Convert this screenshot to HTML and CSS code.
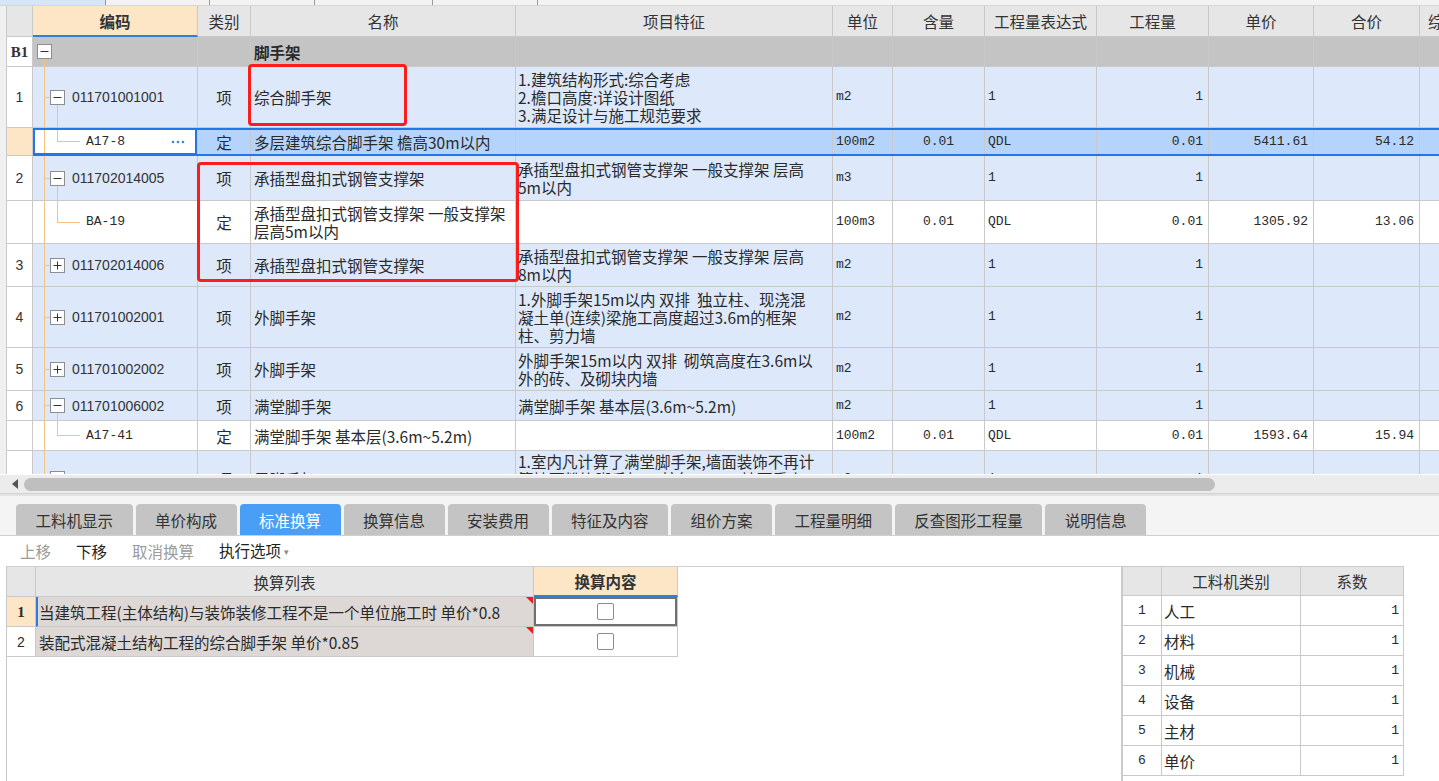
FILE: index.html
```html
<!DOCTYPE html>
<html lang="zh-CN">
<head>
<meta charset="utf-8">
<title>分部分项</title>
<link rel="stylesheet" href="styles.css">
</head>
<body>
<div class="topstrip">
  <div class="ts ts-active"></div>
  <div class="ts w104"></div>
  <div class="ts w105"></div>
  <div class="ts w118"></div>
  <div class="ts w105"></div>
  <div class="ts ts-rest"></div>
</div>

<div class="gridwrap">
  <div class="gutter"></div>
  <div class="grid">
    <div class="row hdr">
      <div class="c rn"></div>
      <div class="c code-h">编码</div>
      <div class="c">类别</div>
      <div class="c">名称</div>
      <div class="c">项目特征</div>
      <div class="c">单位</div>
      <div class="c">含量</div>
      <div class="c">工程量表达式</div>
      <div class="c">工程量</div>
      <div class="c">单价</div>
      <div class="c">合价</div>
      <div class="c lastcol">综合单价</div>
    </div>

    <div class="row gray h30">
      <div class="c rn b1">B1</div>
      <div class="c code t-b1"><svg class="tb" width="15" height="15" viewBox="0 0 15 15"><rect x="0.5" y="0.5" width="14" height="14" fill="#fff" stroke="#8e8e8e"/><path d="M3.5 7.5h8" stroke="#333"/></svg></div>
      <div class="c cat"></div>
      <div class="c name bold">脚手架</div>
      <div class="c"></div><div class="c"></div><div class="c"></div><div class="c"></div><div class="c"></div><div class="c"></div><div class="c"></div><div class="c"></div>
    </div>

    <div class="row blue h61">
      <div class="c rn">1</div>
      <div class="c code t-par"><svg class="tb" width="15" height="15" viewBox="0 0 15 15"><rect x="0.5" y="0.5" width="14" height="14" fill="#fff" stroke="#8e8e8e"/><path d="M3.5 7.5h8" stroke="#333"/></svg><span class="cd">011701001001</span></div>
      <div class="c cat">项</div>
      <div class="c name">综合脚手架</div>
      <div class="c feat">1.建筑结构形式:综合考虑<br>2.檐口高度:详设计图纸<br>3.满足设计与施工规范要求</div>
      <div class="c m">m2</div>
      <div class="c m ctr"></div>
      <div class="c m">1</div>
      <div class="c m num">1</div>
      <div class="c m num"></div>
      <div class="c m num"></div>
      <div class="c"></div>
    </div>

    <div class="row sel h28">
      <div class="c rn"></div>
      <div class="c code t-child active"><span class="m">A17-8</span><svg class="dots" width="14" height="4" viewBox="0 0 14 4"><circle cx="2" cy="2" r="1.3" fill="#3a85dc"/><circle cx="7" cy="2" r="1.3" fill="#3a85dc"/><circle cx="12" cy="2" r="1.3" fill="#3a85dc"/></svg></div>
      <div class="c cat">定</div>
      <div class="c name">多层建筑综合脚手架 檐高30m以内</div>
      <div class="c feat"></div>
      <div class="c m">100m2</div>
      <div class="c m ctr">0.01</div>
      <div class="c m">QDL</div>
      <div class="c m num">0.01</div>
      <div class="c m num">5411.61</div>
      <div class="c m num">54.12</div>
      <div class="c"></div>
    </div>

    <div class="row blue h45">
      <div class="c rn">2</div>
      <div class="c code t-par"><svg class="tb" width="15" height="15" viewBox="0 0 15 15"><rect x="0.5" y="0.5" width="14" height="14" fill="#fff" stroke="#8e8e8e"/><path d="M3.5 7.5h8" stroke="#333"/></svg><span class="cd">011702014005</span></div>
      <div class="c cat">项</div>
      <div class="c name">承插型盘扣式钢管支撑架</div>
      <div class="c feat">承插型盘扣式钢管支撑架 一般支撑架 层高<br>5m以内</div>
      <div class="c m">m3</div>
      <div class="c m ctr"></div>
      <div class="c m">1</div>
      <div class="c m num">1</div>
      <div class="c m num"></div>
      <div class="c m num"></div>
      <div class="c"></div>
    </div>

    <div class="row white h43">
      <div class="c rn"></div>
      <div class="c code t-child"><span class="m">BA-19</span></div>
      <div class="c cat">定</div>
      <div class="c name">承插型盘扣式钢管支撑架 一般支撑架<br>层高5m以内</div>
      <div class="c feat"></div>
      <div class="c m">100m3</div>
      <div class="c m ctr">0.01</div>
      <div class="c m">QDL</div>
      <div class="c m num">0.01</div>
      <div class="c m num">1305.92</div>
      <div class="c m num">13.06</div>
      <div class="c"></div>
    </div>

    <div class="row blue h43">
      <div class="c rn">3</div>
      <div class="c code t-leaf"><svg class="tb" width="15" height="15" viewBox="0 0 15 15"><rect x="0.5" y="0.5" width="14" height="14" fill="#fff" stroke="#8e8e8e"/><path d="M3.5 7.5h8M7.5 3.5v8" stroke="#333"/></svg><span class="cd">011702014006</span></div>
      <div class="c cat">项</div>
      <div class="c name">承插型盘扣式钢管支撑架</div>
      <div class="c feat">承插型盘扣式钢管支撑架 一般支撑架 层高<br>8m以内</div>
      <div class="c m">m2</div>
      <div class="c m ctr"></div>
      <div class="c m">1</div>
      <div class="c m num">1</div>
      <div class="c m num"></div>
      <div class="c m num"></div>
      <div class="c"></div>
    </div>

    <div class="row blue h61">
      <div class="c rn">4</div>
      <div class="c code t-leaf"><svg class="tb" width="15" height="15" viewBox="0 0 15 15"><rect x="0.5" y="0.5" width="14" height="14" fill="#fff" stroke="#8e8e8e"/><path d="M3.5 7.5h8M7.5 3.5v8" stroke="#333"/></svg><span class="cd">011701002001</span></div>
      <div class="c cat">项</div>
      <div class="c name">外脚手架</div>
      <div class="c feat">1.外脚手架15m以内 双排&nbsp;&nbsp;独立柱、现浇混<br>凝土单(连续)梁施工高度超过3.6m的框架<br>柱、剪力墙</div>
      <div class="c m">m2</div>
      <div class="c m ctr"></div>
      <div class="c m">1</div>
      <div class="c m num">1</div>
      <div class="c m num"></div>
      <div class="c m num"></div>
      <div class="c"></div>
    </div>

    <div class="row blue h43">
      <div class="c rn">5</div>
      <div class="c code t-leaf"><svg class="tb" width="15" height="15" viewBox="0 0 15 15"><rect x="0.5" y="0.5" width="14" height="14" fill="#fff" stroke="#8e8e8e"/><path d="M3.5 7.5h8M7.5 3.5v8" stroke="#333"/></svg><span class="cd">011701002002</span></div>
      <div class="c cat">项</div>
      <div class="c name">外脚手架</div>
      <div class="c feat">外脚手架15m以内 双排&nbsp;&nbsp;砌筑高度在3.6m以<br>外的砖、及砌块内墙</div>
      <div class="c m">m2</div>
      <div class="c m ctr"></div>
      <div class="c m">1</div>
      <div class="c m num">1</div>
      <div class="c m num"></div>
      <div class="c m num"></div>
      <div class="c"></div>
    </div>

    <div class="row blue h30">
      <div class="c rn">6</div>
      <div class="c code t-par"><svg class="tb" width="15" height="15" viewBox="0 0 15 15"><rect x="0.5" y="0.5" width="14" height="14" fill="#fff" stroke="#8e8e8e"/><path d="M3.5 7.5h8" stroke="#333"/></svg><span class="cd">011701006002</span></div>
      <div class="c cat">项</div>
      <div class="c name">满堂脚手架</div>
      <div class="c feat">满堂脚手架 基本层(3.6m~5.2m)</div>
      <div class="c m">m2</div>
      <div class="c m ctr"></div>
      <div class="c m">1</div>
      <div class="c m num">1</div>
      <div class="c m num"></div>
      <div class="c m num"></div>
      <div class="c"></div>
    </div>

    <div class="row white h30">
      <div class="c rn"></div>
      <div class="c code t-child"><span class="m">A17-41</span></div>
      <div class="c cat">定</div>
      <div class="c name">满堂脚手架 基本层(3.6m~5.2m)</div>
      <div class="c feat"></div>
      <div class="c m">100m2</div>
      <div class="c m ctr">0.01</div>
      <div class="c m">QDL</div>
      <div class="c m num">0.01</div>
      <div class="c m num">1593.64</div>
      <div class="c m num">15.94</div>
      <div class="c"></div>
    </div>

    <div class="row blue h56">
      <div class="c rn">7</div>
      <div class="c code t-leaf"><svg class="tb" width="15" height="15" viewBox="0 0 15 15"><rect x="0.5" y="0.5" width="14" height="14" fill="#fff" stroke="#8e8e8e"/><path d="M3.5 7.5h8M7.5 3.5v8" stroke="#333"/></svg><span class="cd">011701003001</span></div>
      <div class="c cat">项</div>
      <div class="c name">里脚手架</div>
      <div class="c feat">1.室内凡计算了满堂脚手架,墙面装饰不再计<br>算墙面粉饰脚手架,只按每100m2墙面垂直<br>投影面积增加改架一般技术措施费</div>
      <div class="c m">m2</div>
      <div class="c m ctr"></div>
      <div class="c m">1</div>
      <div class="c m num">1</div>
      <div class="c m num"></div>
      <div class="c m num"></div>
      <div class="c"></div>
    </div>

    <div class="redbox rb1"></div>
    <div class="redbox rb2"></div>
  </div>
</div>

<div class="hscroll">
  <svg class="arrow" width="6" height="10" viewBox="0 0 6 10"><path d="M6 0V10L0 5Z" fill="#555"/></svg>
  <div class="thumb"></div>
</div>

<div class="tabbar">
  <div class="tab">工料机显示</div>
  <div class="tab">单价构成</div>
  <div class="tab on">标准换算</div>
  <div class="tab">换算信息</div>
  <div class="tab">安装费用</div>
  <div class="tab">特征及内容</div>
  <div class="tab">组价方案</div>
  <div class="tab">工程量明细</div>
  <div class="tab">反查图形工程量</div>
  <div class="tab">说明信息</div>
</div>

<div class="toolbar">
  <span class="dis">上移</span>
  <span>下移</span>
  <span class="dis">取消换算</span>
  <span>执行选项<span class="caret">▾</span></span>
</div>

<div class="bottom">
  <div class="lpane">
    <div class="lt-row lt-hdr">
      <div class="lc"></div>
      <div class="lc">换算列表</div>
      <div class="lc peach">换算内容</div>
    </div>
    <div class="lt-row">
      <div class="lc lrn on">1</div>
      <div class="lc item first">当建筑工程(主体结构)与装饰装修工程不是一个单位施工时 单价*0.8</div>
      <div class="lc chk act"><span class="box"></span></div>
    </div>
    <div class="lt-row">
      <div class="lc lrn">2</div>
      <div class="lc item">装配式混凝土结构工程的综合脚手架 单价*0.85</div>
      <div class="lc chk"><span class="box"></span></div>
    </div>
  </div>
  <div class="rpane">
    <div class="rt-row rt-hdr">
      <div class="rc"></div>
      <div class="rc">工料机类别</div>
      <div class="rc">系数</div>
    </div>
    <div class="rt-row"><div class="rc rrn">1</div><div class="rc rname">人工</div><div class="rc rnum">1</div></div>
    <div class="rt-row"><div class="rc rrn">2</div><div class="rc rname">材料</div><div class="rc rnum">1</div></div>
    <div class="rt-row"><div class="rc rrn">3</div><div class="rc rname">机械</div><div class="rc rnum">1</div></div>
    <div class="rt-row"><div class="rc rrn">4</div><div class="rc rname">设备</div><div class="rc rnum">1</div></div>
    <div class="rt-row"><div class="rc rrn">5</div><div class="rc rname">主材</div><div class="rc rnum">1</div></div>
    <div class="rt-row"><div class="rc rrn">6</div><div class="rc rname">单价</div><div class="rc rnum">1</div></div>
  </div>
</div>
</body>
</html>
```
FILE: styles.css
```css
* { box-sizing: border-box; }
html, body { margin: 0; padding: 0; }
body {
  width: 1439px;
  height: 781px;
  overflow: hidden;
  background: #fff;
  font-family: "Noto Sans CJK SC", "Liberation Sans", sans-serif;
  font-size: 15.5px;
  line-height: 18px;
  color: #2a2a2a;
  --tl: #f2c382;
  --grid: #c9c9c9;
}

/* top strip */
.topstrip { height: 6px; display: flex; background: #f3f3f3; border-bottom: 1px solid #d6d6d6; }
.ts { height: 100%; border-right: 1px solid #9a9a9a; }
.ts-active { width: 106px; background: #d4e6f7; }
.w104 { width: 104px; }
.w105 { width: 105px; }
.w118 { width: 118px; }
.ts-rest { flex: 1; border-right: none; }

/* main grid */
.gridwrap { display: flex; height: 468px; }
.gutter { width: 6px; flex: none; background: #f0f0f0; }
.grid { position: relative; flex: 1; overflow: hidden; border-left: 1px solid var(--grid); }

.row {
  display: grid;
  grid-template-columns: 26px 165px 53px 265px 317px 60px 92px 112px 112px 105px 106px 140px;
}
.h30 { height: 30px; }
.h28 { height: 28px; }
.h43 { height: 43px; }
.h45 { height: 45px; }
.h56 { height: 56px; }
.h61 { height: 61px; }

.c {
  display: flex;
  align-items: center;
  padding: 0 3px;
  border-right: 1px solid var(--grid);
  border-bottom: 1px solid var(--grid);
  white-space: nowrap;
  overflow: hidden;
  background-repeat: no-repeat;
}

.hdr { height: 31px; }
.hdr .c { background-color: #e6e6e6; justify-content: center; color: #333; }
.hdr .c.code-h { background-color: #fde6c6; font-weight: bold; border-bottom: 2px solid #2f7fe3; }
.hdr .c.lastcol { justify-content: flex-start; padding-left: 8px; }

.row.gray .c { background-color: #c4c4c4; }
.row.blue .c { background-color: #dde9fb; }
.row.white .c { background-color: #fff; }
.row.sel .c { background-color: #b5d4fb; }
.row .c.rn { background-color: #fff; justify-content: center; font-family: "Liberation Sans", sans-serif; font-size: 14px; color: #333; }
.row.hdr .c.rn { background-color: #e6e6e6; }
.row.sel .c.rn { background-color: #fde6c6; }
.row .c.rn.b1 { font-family: "Liberation Serif", serif; font-weight: bold; font-size: 15px; }

.row.sel { position: relative; }
.row.sel::after {
  content: "";
  position: absolute;
  left: 26px; right: 0; top: 0; bottom: 0;
  border-top: 2px solid #1f78ea;
  border-bottom: 2px solid #1f78ea;
  pointer-events: none;
}
.row.sel .c.active { background-color: #fff; box-shadow: inset 0 0 0 2px #1f78ea; }

.bold { font-weight: bold; }
.cat { justify-content: center; }
.name { padding-left: 3px; }
.feat { padding-left: 2px; }
.m { font-family: "Liberation Mono", monospace; font-size: 13px; }
.ctr { justify-content: center; }
.num { justify-content: flex-end; padding-right: 5px; }

/* code column / tree */
.code { padding-left: 17px; gap: 7px; }
.code .cd { font-family: "Liberation Sans", sans-serif; font-size: 14px; color: #333; }
.tb { flex: none; display: block; }
.t-b1 {
  padding-left: 4px;
  background-image: linear-gradient(to bottom, transparent calc(50% + 7px), var(--tl) 0);
  background-position: 11px 0;
  background-size: 1px 100%;
}
.t-par {
  background-image:
    linear-gradient(var(--tl), var(--tl)),
    linear-gradient(var(--tl), var(--tl)),
    linear-gradient(to bottom, transparent calc(50% + 7px), var(--tl) 0);
  background-position: 11px 0, 11px 50%, 24px 0;
  background-size: 1px 100%, 6px 1px, 1px 100%;
}
.t-leaf {
  background-image:
    linear-gradient(var(--tl), var(--tl)),
    linear-gradient(var(--tl), var(--tl));
  background-position: 11px 0, 11px 50%;
  background-size: 1px 100%, 6px 1px;
}
.t-child {
  padding-left: 53px;
  padding-right: 12px;
  background-image:
    linear-gradient(var(--tl), var(--tl)),
    linear-gradient(to bottom, var(--tl) 50%, transparent 0),
    linear-gradient(var(--tl), var(--tl));
  background-position: 11px 0, 24px 0, 24px 50%;
  background-size: 1px 100%, 1px 100%, 23px 1px;
}
.dots { margin-left: auto; }

.redbox {
  position: absolute;
  border: 3px solid #fb1c1c;
  border-radius: 4px;
  pointer-events: none;
}
.rb1 { left: 241px; top: 58px; width: 159px; height: 62px; }
.rb2 { left: 190px; top: 156px; width: 322px; height: 120px; }

/* horizontal scrollbar */
.hscroll {
  height: 20px;
  display: flex;
  align-items: center;
  background: #ececec;
  border-top: 1px solid #fff;
  border-bottom: 1px solid #d2d2d2;
  padding-left: 12px;
}
.arrow { display: block; }
.thumb { margin-left: 6px; width: 1191px; height: 13px; border-radius: 7px; background: #bfbfbf; }

/* tabs */
.tabbar {
  height: 42px;
  display: flex;
  align-items: flex-end;
  gap: 3px;
  padding-left: 16px;
  background: #f4f4f4;
  border-top: 2px solid #e2e2e2;
  border-bottom: 1px solid #cfcfcf;
}
.tab {
  height: 31px;
  padding: 0 19.5px;
  display: flex;
  align-items: center;
  background: #c4c4c4;
  border-radius: 4px 4px 0 0;
  color: #333;
}
.tab.on { background: #4a9ef5; color: #fff; }

/* toolbar */
.toolbar {
  height: 30px;
  display: flex;
  align-items: center;
  gap: 25px;
  padding-left: 20px;
  color: #1f1f1f;
}
.toolbar .dis { color: #9b9b9b; }
.caret { font-size: 9px; color: #8a8a8a; margin-left: 3px; vertical-align: 2px; }

/* bottom panes */
.bottom { display: flex; height: 215px; }
.lpane {
  margin-left: 6px;
  width: 1115px;
  border-left: 1px solid var(--grid);
  border-top: 1px solid #d0d0d0;
}
.lt-row { display: grid; grid-template-columns: 29px 498px 144px; height: 30px; }
.lc {
  display: flex;
  align-items: center;
  border-right: 1px solid var(--grid);
  border-bottom: 1px solid var(--grid);
  padding: 0 3px;
  white-space: nowrap;
  overflow: hidden;
  position: relative;
}
.lt-hdr .lc { background: #e6e6e6; justify-content: center; color: #333; }
.lt-hdr .lc.peach { background: #fde6c6; font-weight: bold; border-bottom: 2px solid #2f7fe3; }
.lrn { justify-content: center; font-family: "Liberation Sans", sans-serif; font-size: 14px; background: #fff; }
.lrn.on { background: #fde6c6; font-family: "Liberation Serif", serif; font-weight: bold; font-size: 15px; }
.item { background: #ddd8d6; padding-left: 3px; }
.item.first { border-left: 2px solid #2a7be6; padding-left: 1px; }
.item::after {
  content: "";
  position: absolute;
  top: 0; right: 0;
  border-top: 7px solid #f01c1c;
  border-left: 7px solid transparent;
}
.chk { justify-content: center; background: #fff; }
.chk.act { box-shadow: inset 0 0 0 2px #707070; }
.box { width: 17px; height: 17px; border: 1px solid #8c8c8c; border-radius: 2px; background: #fff; }

.rpane { flex: 1; border-left: 2px solid #cbcbcb; }
.rt-row { display: grid; grid-template-columns: 39px 139px 103px; height: 30px; }
.rc {
  display: flex;
  align-items: center;
  border-right: 1px solid var(--grid);
  border-bottom: 1px solid var(--grid);
  padding: 0 3px;
  white-space: nowrap;
}
.rt-hdr .rc { background: #e6e6e6; justify-content: center; color: #333; border-top: 1px solid var(--grid); }
.rrn { justify-content: center; font-family: "Liberation Mono", monospace; font-size: 13px; }
.rname { padding-left: 2px; }
.rnum { justify-content: flex-end; padding-right: 4px; font-family: "Liberation Mono", monospace; font-size: 13px; }
```
